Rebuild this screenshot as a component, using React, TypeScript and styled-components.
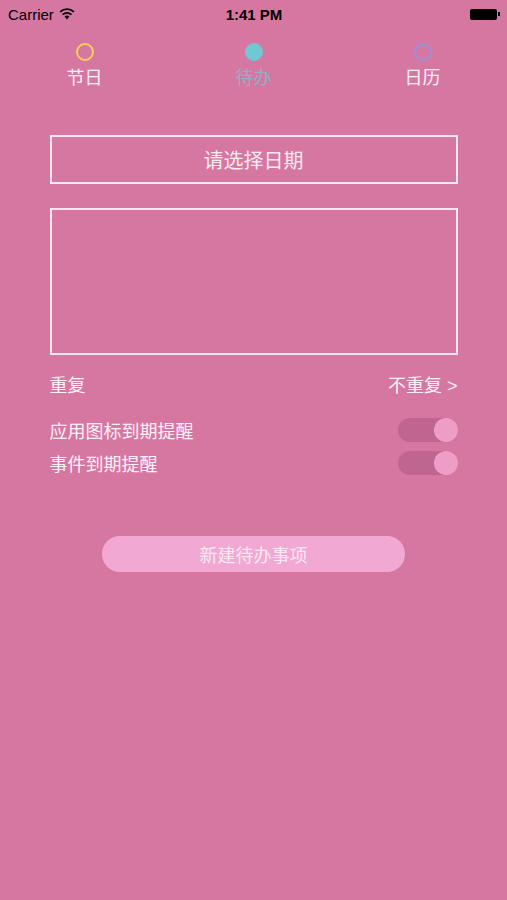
import styled, { createGlobalStyle } from "styled-components";

const GlobalStyle = createGlobalStyle`
  html, body {
    margin: 0;
    padding: 0;
    background-color: #d677a2;
  }
  body {
    font-family: "Liberation Sans", "Noto Sans CJK SC", sans-serif;
  }
`;

const tabs = [
  { label: "节日", color: "#f6cf5a", filled: false, active: false },
  { label: "待办", color: "#72c8d2", filled: true, active: true },
  { label: "日历", color: "#9a8fdb", filled: false, active: false },
];

export default function App() {
  return (
    <>
      <GlobalStyle />
      <Page>
        <StatusBar>
          <Carrier>
            Carrier
            <svg width="16" height="12" viewBox="0 0 16 12">
              <path d="M8 11.5 L5.6 8.6 A3.6 3.6 0 0 1 10.4 8.6 Z" fill="#000" />
              <path
                d="M3.6 6.6 A6.4 6.4 0 0 1 12.4 6.6"
                stroke="#000"
                strokeWidth="1.8"
                fill="none"
              />
              <path
                d="M1.2 3.9 A9.8 9.8 0 0 1 14.8 3.9"
                stroke="#000"
                strokeWidth="1.8"
                fill="none"
              />
            </svg>
          </Carrier>
          <Time>1:41 PM</Time>
          <Battery>
            <BatteryBody />
            <BatteryTip />
          </Battery>
        </StatusBar>

        <TabBar>
          {tabs.map((t) => (
            <Tab key={t.label}>
              <Dot $color={t.color} $filled={t.filled} />
              <TabLabel $active={t.active}>{t.label}</TabLabel>
            </Tab>
          ))}
        </TabBar>

        <Form>
          <DateBox>请选择日期</DateBox>
          <NoteBox />

          <Rows>
            <RepeatRow>
              <RowLabel>重复</RowLabel>
              <RowLabel>不重复 &gt;</RowLabel>
            </RepeatRow>
            <SwitchRow>
              <RowLabel>应用图标到期提醒</RowLabel>
              <Toggle>
                <Knob />
              </Toggle>
            </SwitchRow>
            <SwitchRow>
              <RowLabel>事件到期提醒</RowLabel>
              <Toggle>
                <Knob />
              </Toggle>
            </SwitchRow>
          </Rows>
        </Form>

        <CreateButton>新建待办事项</CreateButton>
      </Page>
    </>
  );
}

const Page = styled.div`
  width: 507px;
  min-height: 900px;
  background-color: #d677a2;
  display: flex;
  flex-direction: column;
  align-items: center;
`;

const StatusBar = styled.div`
  width: 100%;
  height: 28px;
  box-sizing: border-box;
  padding: 0 7px 0 8px;
  display: flex;
  align-items: center;
  justify-content: space-between;
  font-family: "Liberation Sans", sans-serif;
  font-size: 15px;
  color: #000;
`;

const Carrier = styled.div`
  display: flex;
  align-items: center;
  gap: 5px;
  width: 120px;
`;

const Time = styled.div`
  font-weight: bold;
`;

const Battery = styled.div`
  width: 120px;
  display: flex;
  justify-content: flex-end;
  align-items: center;
`;

const BatteryBody = styled.div`
  width: 27px;
  height: 11px;
  background: #000;
  border-radius: 2px;
`;

const BatteryTip = styled.div`
  width: 2px;
  height: 4px;
  background: #000;
  margin-left: 1px;
`;

const TabBar = styled.div`
  width: 100%;
  display: grid;
  grid-template-columns: 85px 1fr 85px;
  box-sizing: border-box;
  padding: 15px 42px 0;
  justify-items: center;
`;

const Tab = styled.div`
  display: flex;
  flex-direction: column;
  align-items: center;
  width: 85px;
`;

const Dot = styled.div<{ $color: string; $filled: boolean }>`
  width: 18px;
  height: 18px;
  box-sizing: border-box;
  border-radius: 50%;
  border: 2px solid ${(p) => p.$color};
  background: ${(p) => (p.$filled ? p.$color : "transparent")};
`;

const TabLabel = styled.div<{ $active: boolean }>`
  margin-top: 6px;
  font-size: 18px;
  line-height: 22px;
  color: ${(p) => (p.$active ? "#95aec4" : "#fdf0f6")};
`;

const Form = styled.div`
  width: 408px;
  margin-top: 46px;
  display: flex;
  flex-direction: column;
`;

const DateBox = styled.div`
  height: 49px;
  box-sizing: border-box;
  border: 2px solid #fbe6f0;
  display: flex;
  align-items: center;
  justify-content: center;
  font-size: 20px;
  color: #fbeaf2;
`;

const NoteBox = styled.div`
  height: 147px;
  margin-top: 24px;
  box-sizing: border-box;
  border: 2px solid #fbe6f0;
`;

const Rows = styled.div`
  margin-top: 16px;
  display: flex;
  flex-direction: column;
`;

const RepeatRow = styled.div`
  height: 26px;
  display: flex;
  align-items: center;
  justify-content: space-between;
  margin-bottom: 16px;
`;

const SwitchRow = styled.div`
  height: 33px;
  display: flex;
  align-items: center;
  justify-content: space-between;
`;

const RowLabel = styled.div`
  font-size: 18px;
  color: #fdf0f6;
`;

const Toggle = styled.div`
  width: 60px;
  height: 24px;
  border-radius: 12px;
  background: #c0658f;
  display: flex;
  justify-content: flex-end;
`;

const Knob = styled.div`
  width: 24px;
  height: 24px;
  border-radius: 50%;
  background: #ee9ec6;
`;

const CreateButton = styled.div`
  width: 303px;
  height: 36px;
  margin-top: 57px;
  border-radius: 18px;
  background: #f1a9d3;
  display: flex;
  align-items: center;
  justify-content: center;
  font-size: 18px;
  color: #fbe8f3;
`;
